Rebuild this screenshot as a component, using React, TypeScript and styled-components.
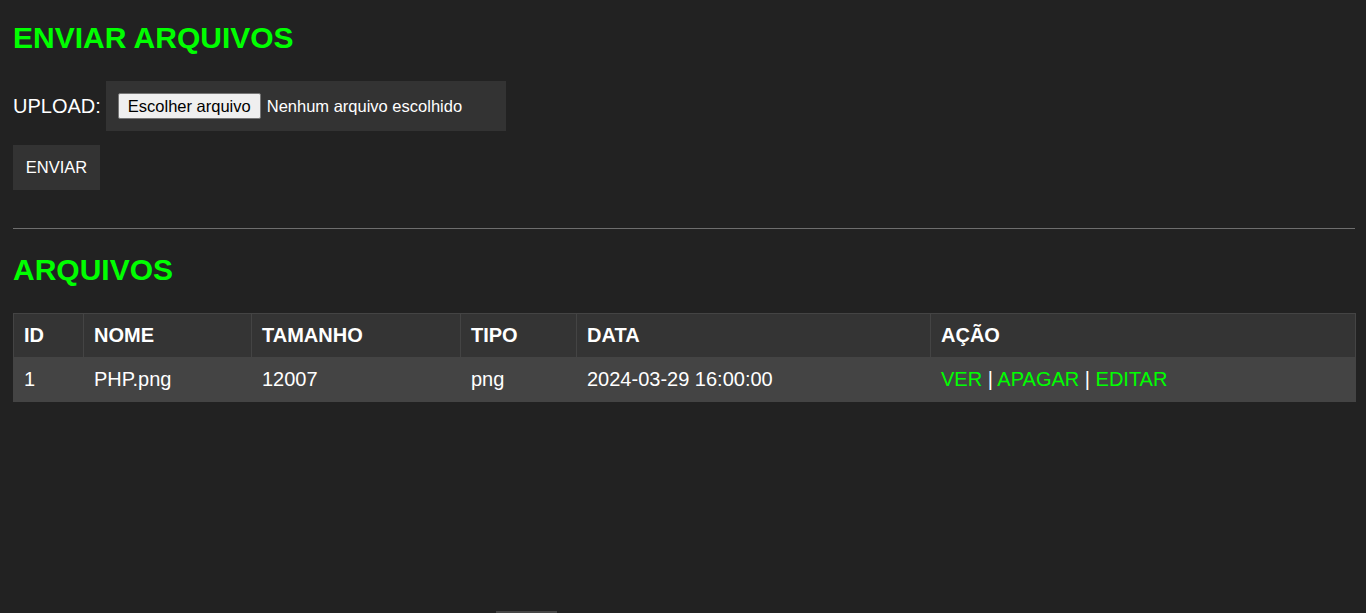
import React from "react";
import styled, { createGlobalStyle } from "styled-components";

const GlobalStyle = createGlobalStyle`
  html, body {
    margin: 0;
    padding: 0;
    background: #222222;
  }
  body {
    font-family: "Liberation Sans", Arial, sans-serif;
    color: #ffffff;
  }
`;

const Page = styled.div`
  display: flex;
  flex-direction: column;
  align-items: stretch;
  padding: 0 11px 0 13px;
  min-height: 613px;
  box-sizing: border-box;
`;

const Heading = styled.h2<{ $top: number; $bottom: number }>`
  margin: ${(p) => p.$top}px 0 ${(p) => p.$bottom}px;
  font-size: 30px;
  line-height: 34px;
  font-weight: bold;
  color: #00ff00;
`;

const UploadRow = styled.div`
  display: flex;
  align-items: center;
  gap: 5px;
`;

const Label = styled.span`
  font-size: 20px;
  line-height: 23px;
  color: #ffffff;
`;

const FileBox = styled.div`
  display: flex;
  align-items: center;
  width: 400px;
  height: 50px;
  box-sizing: border-box;
  padding: 0 12px;
  background: #333333;
`;

const FileButton = styled.button`
  height: 26px;
  box-sizing: border-box;
  padding: 0 9px;
  margin: 0 6px 0 0;
  font-family: "Liberation Sans", Arial, sans-serif;
  font-size: 16.5px;
  color: #000000;
  background: #efefef;
  border: 1px solid #767676;
  border-radius: 2px;
`;

const FileStatus = styled.span`
  font-size: 16.5px;
  color: #ffffff;
`;

const SendButton = styled.button`
  align-self: flex-start;
  margin-top: 14px;
  width: 87px;
  height: 45px;
  padding: 0;
  border: none;
  background: #333333;
  color: #ffffff;
  font-family: "Liberation Sans", Arial, sans-serif;
  font-size: 16.5px;
`;

const Rule = styled.hr`
  margin: 38px 0 0;
  border: none;
  height: 1px;
  background: #6e6e6e;
`;

const Table = styled.table`
  width: 100%;
  table-layout: fixed;
  border-collapse: collapse;
  font-family: "Liberation Sans", Arial, sans-serif;
  font-size: 20px;
`;

const HeadCell = styled.th`
  text-align: left;
  font-weight: bold;
  font-size: 20px;
  padding: 11px 10px;
  line-height: 21px;
  background: #343434;
  border: 1px solid #444444;
  color: #ffffff;
`;

const Cell = styled.td`
  font-size: 20px;
  padding: 11px 10px;
  line-height: 21px;
  background: #444444;
  border: 1px solid #444444;
  color: #ffffff;
`;

const Action = styled.a`
  color: #00ff00;
  text-decoration: none;
`;

const Stub = styled.div`
  margin: auto 0 0 483px;
  width: 61px;
  height: 2px;
  background: #464646;
`;

const columns = [
  { name: "ID", width: 70 },
  { name: "NOME", width: 168 },
  { name: "TAMANHO", width: 209 },
  { name: "TIPO", width: 116 },
  { name: "DATA", width: 354 },
  { name: "AÇÃO", width: 425 },
];

const files = [
  { id: 1, nome: "PHP.png", tamanho: 12007, tipo: "png", data: "2024-03-29 16:00:00" },
];

export default function App() {
  return (
    <>
      <GlobalStyle />
      <Page>
        <Heading $top={21} $bottom={26}>ENVIAR ARQUIVOS</Heading>
        <UploadRow>
          <Label>UPLOAD:</Label>
          <FileBox>
            <FileButton type="button">Escolher arquivo</FileButton>
            <FileStatus>Nenhum arquivo escolhido</FileStatus>
          </FileBox>
        </UploadRow>
        <SendButton type="button">ENVIAR</SendButton>
        <Rule />
        <Heading $top={24} $bottom={26}>ARQUIVOS</Heading>
        <Table>
          <colgroup>
            {columns.map((c) => (
              <col key={c.name} style={{ width: c.width }} />
            ))}
          </colgroup>
          <thead>
            <tr>
              {columns.map((c) => (
                <HeadCell key={c.name}>{c.name}</HeadCell>
              ))}
            </tr>
          </thead>
          <tbody>
            {files.map((f) => (
              <tr key={f.id}>
                <Cell>{f.id}</Cell>
                <Cell>{f.nome}</Cell>
                <Cell>{f.tamanho}</Cell>
                <Cell>{f.tipo}</Cell>
                <Cell>{f.data}</Cell>
                <Cell>
                  <Action href="#">VER</Action> | <Action href="#">APAGAR</Action> |{" "}
                  <Action href="#">EDITAR</Action>
                </Cell>
              </tr>
            ))}
          </tbody>
        </Table>
        <Stub />
      </Page>
    </>
  );
}
